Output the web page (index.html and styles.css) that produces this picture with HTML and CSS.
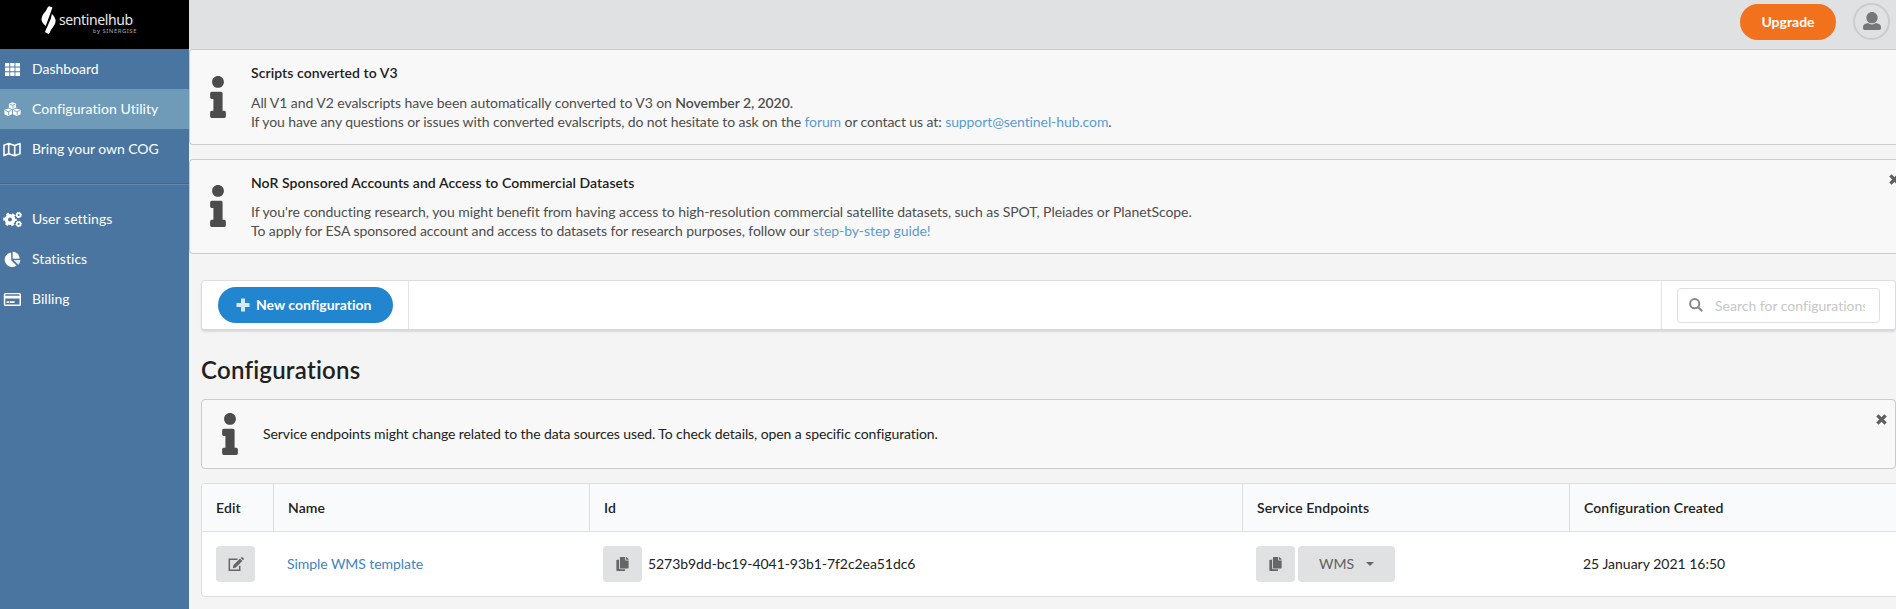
FILE: index.html
```html
<!DOCTYPE html>
<html lang="en">
<head>
<meta charset="utf-8">
<title>Configuration Utility</title>
<link rel="stylesheet" href="styles.css">
</head>
<body>
<svg class="defs" aria-hidden="true">
  <symbol id="info" viewBox="0 0 192 512"><path d="M20 424.229h20V279.771H20c-11.046 0-20-8.954-20-20V212c0-11.046 8.954-20 20-20h112c11.046 0 20 8.954 20 20v212.229h20c11.046 0 20 8.954 20 20V492c0 11.046-8.954 20-20 20H20c-11.046 0-20-8.954-20-20v-47.771c0-11.046 8.954-20 20-20zM96 0C56.235 0 24 32.235 24 72s32.235 72 72 72 72-32.235 72-72S135.764 0 96 0z"/></symbol>
  <symbol id="times" viewBox="0 0 11 11"><path d="M2.6 2.6l5.8 5.8M8.4 2.6L2.6 8.4" fill="none" stroke="currentColor" stroke-width="3.4" stroke-linecap="square"/></symbol>
  <symbol id="copy" viewBox="0 0 448 512"><path d="M320 448v40c0 13.255-10.745 24-24 24H24c-13.255 0-24-10.745-24-24V120c0-13.255 10.745-24 24-24h72v296c0 30.879 25.121 56 56 56h168zm0-344V0H152c-13.255 0-24 10.745-24 24v368c0 13.255 10.745 24 24 24h272c13.255 0 24-10.745 24-24V128H344c-13.2 0-24-10.8-24-24zm120.971-31.029L375.029 7.029A24 24 0 0 0 358.059 0H352v96h96v-6.059a24 24 0 0 0-7.029-16.97z"/></symbol>
</svg>
<div class="app">
  <aside class="sidebar">
    <div class="logo">
      <svg class="mark" viewBox="0 0 15 30"><path d="M6.200 2.200Q7 .2 8.200.2L11.600 1.500 4.600 20.800Q.2 17 .2 13.500Q.3 10.800 2.600 7.800Q5 5 6.200 2.200z"/><path d="M11 8Q14.900 12 14.900 15.800Q14.700 18.500 12.400 21.500Q9.800 24.500 8.600 28L7.500 29 3.800 27 10 13z"/></svg>
      <div class="wordmark"><span class="brand">sentinelhub</span><span class="byline">by SINERGISE</span></div>
    </div>
    <nav>
      <a class="item"><svg class="nav-icon" viewBox="0 0 18 18"><path d="M2 3h4.300v3.600H2zM7.200 3h4.300v3.600H7.200zM12.400 3H17v3.600h-4.600zM2 7.600h4.300v3.600H2zM7.200 7.600h4.300v3.600H7.200zM12.400 7.600H17v3.600h-4.600zM2 12.200h4.300V16H2zM7.200 12.200h4.300V16H7.200zM12.400 12.200H17V16h-4.600z"/></svg>Dashboard</a>
      <a class="item active"><svg class="nav-icon" viewBox="0 0 18 18"><path d="M9.500 2.200l3.600 1.500v4L9.500 9.300 5.900 7.700v-4zM5.200 8.400L9 10v4.300l-3.800 1.600-3.800-1.600V10zM13.800 8.400l3.800 1.600v4.300l-3.800 1.600L10 14.300V10z"/><path class="cut" d="M6.900 4.300l2.600 1 2.600-1M9.900 5.300v3M2.300 10.600l2.900 1.100 2.900-1.100M5.600 11.700v3.100M10.900 10.600l2.900 1.100 2.900-1.100M14.200 11.700v3.100"/></svg><span class="wider">Configuration Utility</span></a>
      <a class="item"><svg class="nav-icon line" viewBox="0 0 18 18"><path d="M1 5.200L5.700 3.500l6 2 5.300-2v10.300l-5.300 2-6-2L1 15.600zM5.700 3.500v10.300M11.700 5.500v10.300"/></svg><span class="cog">Bring your own COG</span></a>
      <div class="divider"></div>
      <a class="item"><svg class="nav-icon wide" viewBox="0 0 19 18"><circle class="ring big" cx="7" cy="9.500" r="3.700"/><circle class="teeth" cx="7" cy="9.500" r="5.800"/><circle class="ring" cx="15.700" cy="5" r="1.900"/><circle class="teeth small" cx="15.700" cy="5" r="2.700"/><circle class="ring" cx="15.700" cy="14" r="1.900"/><circle class="teeth small" cx="15.700" cy="14" r="2.700"/></svg><span class="wider">User settings</span></a>
      <a class="item"><svg class="nav-icon" viewBox="0 0 18 18"><path d="M8.200 2.500v7.700l5.300 5.300A7.300 7.300 0 1 1 8.200 2.500z"/><path opacity=".95" d="M9.700 1.800a7 7 0 0 1 7 7H9.700z"/><path opacity=".85" d="M10.500 10h7a7 7 0 0 1-2.300 4.800z"/></svg><span class="wider">Statistics</span></a>
      <a class="item"><svg class="nav-icon" viewBox="0 0 18 18"><path fill-rule="evenodd" d="M2.300 3h14.200q1.500 0 1.500 1.500v10q0 1.500-1.500 1.500H2.300Q.8 16 .8 14.500v-10Q.8 3 2.300 3zM2.300 4.300v1.400h14.200V4.300zM2.300 8.500v6h14.200v-6zM3.600 11.300h2.300V13H3.600zM6.600 11.300h5V13h-5z"/></svg><span class="wider">Billing</span></a>
    </nav>
  </aside>
  <main class="main">
    <header class="topbar">
      <button class="upgrade">Upgrade</button>
      <div class="avatar"><svg viewBox="0 0 512 512"><path d="M256 0c88.366 0 160 71.634 160 160s-71.634 160-160 160S96 248.366 96 160 167.634 0 256 0zm183.283 333.821l-71.313-17.828c-74.923 53.890-165.738 41.864-223.940 0l-71.313 17.828C29.981 344.505 0 382.903 0 426.955V464c0 26.510 21.490 48 48 48h416c26.510 0 48-21.490 48-48v-37.045c0-44.052-29.981-82.450-72.717-93.134z"/></svg></div>
    </header>
    <section class="message first">
      <svg class="info"><use href="#info"/></svg>
      <div class="content">
        <h3>Scripts converted to V3</h3>
        <p class="l1">All V1 and V2 evalscripts have been automatically converted to V3 on <b>November 2, 2020.</b></p>
        <p class="tight">If you have any questions or issues with converted evalscripts, do not hesitate to ask on the <a>forum</a> or contact us at: <a>support@sentinel-hub.com</a>.</p>
      </div>
    </section>
    <section class="message second">
      <svg class="info"><use href="#info"/></svg>
      <div class="content">
        <h3>NoR Sponsored Accounts and Access to Commercial Datasets</h3>
        <p class="l1">If you're conducting research, you might benefit from having access to high-resolution commercial satellite datasets, such as SPOT, Pleiades or PlanetScope.</p>
        <p>To apply for ESA sponsored account and access to datasets for research purposes, follow our <a>step-by-step guide!</a></p>
      </div>
      <svg class="close"><use href="#times"/></svg>
    </section>
    <div class="page">
      <div class="menu">
        <div class="menu-left"><button class="new"><svg viewBox="0 0 14 14"><path d="M5 .5h4V5h4.500v4H9v4.500H5V9H.5V5H5z"/></svg>New configuration</button></div>
        <div class="menu-right">
          <div class="search"><svg viewBox="0 0 14 14"><circle cx="5.700" cy="5.700" r="4.600"/><path d="M9.200 9.200l4 4"/></svg><span>Search for configurations</span></div>
        </div>
      </div>
      <h1>Configurations</h1>
      <section class="message third">
        <svg class="info"><use href="#info"/></svg>
        <p class="note">Service endpoints might change related to the data sources used. To check details, open a specific configuration.</p>
        <svg class="close"><use href="#times"/></svg>
      </section>
      <div class="table">
        <div class="row head"><div>Edit</div><div>Name</div><div>Id</div><div>Service Endpoints</div><div>Configuration Created</div></div>
        <div class="row">
          <div><button class="square"><svg class="edit" viewBox="0 0 16 14"><path class="box" d="M9.500 2.200H1.300v11h10.400V8.800"/><path d="M12 1.600l2.400 2.400-6.600 6.600-3 .6.500-3zM12.700.9l.7-.7q.5-.4 1 0l1.300 1.300q.5.500 0 1l-.7.700z"/></svg></button></div>
          <div><a class="name">Simple WMS template</a></div>
          <div class="shift"><button class="square"><svg class="copy"><use href="#copy"/></svg></button><span class="uid">5273b9dd-bc19-4041-93b1-7f2c2ea51dc6</span></div>
          <div class="shift"><button class="square"><svg class="copy"><use href="#copy"/></svg></button><button class="wms">WMS<i class="caret"></i></button></div>
          <div class="shift"><span class="date">25 January 2021 16:50</span></div>
        </div>
      </div>
    </div>
  </main>
</div>
</body>
</html>
```
FILE: styles.css
```css
* { box-sizing: border-box; }
html { overflow: hidden; }
body { margin: 0; background: #f4f4f4; color: #212121; font: 14px/20px Lato, "Liberation Sans", sans-serif; font-variant-ligatures: none; overflow: hidden; }
h1, h3, p { margin: 0; }
svg { display: block; fill: currentColor; flex: none; }
button { border: 0; padding: 0; font: inherit; display: flex; align-items: center; flex: none; }
.defs { position: absolute; width: 0; height: 0; }
.app { display: flex; width: 1896px; height: 609px; overflow: hidden; }

.sidebar { width: 189px; flex: none; background: #4a75a0; color: #fff; }
.logo { height: 49px; background: #000; display: flex; padding: 6px 0 0 41px; gap: 3px; }
.mark { width: 15px; height: 29px; }
.wordmark { display: flex; flex-direction: column; width: 78px; padding-top: 5px; font-family: "Noto Sans", sans-serif; }
.brand { font-size: 14px; line-height: 18px; letter-spacing: -.38px; color: #e8e8e8; }
.byline { font-size: 6px; line-height: 7px; align-self: flex-end; margin: -1px 0 0 0; letter-spacing: .5px; color: #aaa; white-space: nowrap; }
.item { display: flex; align-items: center; height: 40px; padding-left: 3px; }
.item.active { background: #6f9bb8; }
.nav-icon { width: 18px; height: 18px; margin-right: 11px; }
.nav-icon.wide { width: 19px; margin-right: 10px; }
.nav-icon .cut { fill: none; stroke: #6f9bb8; stroke-width: .9; }
.nav-icon.line { fill: none; stroke: #fff; stroke-width: 1.600; stroke-linejoin: round; }
.cog { letter-spacing: -.06px; }
.wider { letter-spacing: .05px; }
.ring { fill: none; stroke: #fff; stroke-width: 1.700; }
.ring.big { stroke-width: 3.400; }
.teeth { fill: none; stroke: #fff; stroke-width: 2; stroke-dasharray: 3 3.070; stroke-dashoffset: 1.500; }
.teeth.small { stroke-width: 1; stroke-dasharray: 1.400 1.430; }
.divider { height: 2px; margin: 14px 0; background: #3f6891; border-bottom: 1px solid #6489ad; }

.main { width: 1707px; flex: none; overflow: hidden; }
.topbar { height: 49px; background: #e0e1e2; display: flex; justify-content: flex-end; padding: 3px 6px 0 0; gap: 17px; }
.upgrade { width: 96px; height: 36px; margin-top: 1px; border-radius: 18px; background: #f2711c; color: #fff; font-weight: 700; justify-content: center; }
.avatar { width: 37px; height: 37px; border: 2px solid #ccc; border-radius: 50%; display: flex; align-items: center; justify-content: center; color: #777; }
.avatar svg { width: 18px; height: 18px; margin-top: -1px; }

.message { display: flex; background: #f8f8f8; border: 1px solid #c9cacb; border-radius: 4px; position: relative; }
.first, .second { border-right: 0; border-radius: 4px 0 0 4px; padding-left: 20px; }
.first { height: 96px; }
.second { height: 95px; margin-top: 14px; }
.info { width: 16px; height: 42px; margin-top: 26px; color: #4c4c4c; }
.second .info { margin-top: 25px; }
.content { margin: 13px 0 0 25px; color: #4d4d4d; }
.content h3 { font-size: 14px; line-height: 20px; font-weight: 600; letter-spacing: .07px; color: #212121; }
.content p { line-height: 19px; white-space: nowrap; letter-spacing: -.07px; }
.content .tight { letter-spacing: -.09px; }
.content .l1 { margin-top: 10px; }
.second .l1 { margin-top: 9px; letter-spacing: -.06px; }
.content b { font-weight: 600; }
.content a { color: #5b9bd5; }
.close { position: absolute; width: 11px; height: 11px; color: #606060; top: 14px; right: 8px; }
.second .close { right: -4px; }

.page { padding: 26px 0 0 12px; }
.menu { height: 51px; display: flex; justify-content: space-between; background: #fff; border: 1px solid #dcddde; border-bottom: 2px solid #d8d9da; border-radius: 4px; box-shadow: 0 1px 2px rgba(34,36,38,.12); }
.menu-left { display: flex; align-items: center; width: 207px; padding-left: 16px; border-right: 1px solid #e3e3e4; }
.new { width: 175px; height: 36px; border-radius: 18px; background: #2185d0; color: #fff; font-weight: 700; padding-left: 18px; }
.new svg { width: 14px; height: 14px; margin-right: 6px; opacity: .82; }
.menu-right { width: 234px; padding: 7px 0 0 15px; border-left: 1px solid #e3e3e4; }
.search { width: 203px; height: 35px; border: 1px solid #dedede; border-radius: 4px; display: flex; align-items: center; padding: 0 14px 0 11px; color: #c7c7c7; }
.search svg { width: 14px; height: 14px; margin: -2px 12px 0 0; fill: none; stroke: #888; stroke-width: 2; }
.search span { overflow: hidden; white-space: nowrap; flex: 1; }
h1 { font-size: 24px; line-height: 30px; font-weight: 600; letter-spacing: .24px; margin-top: 24px; }
.third { height: 70px; margin-top: 14px; padding-left: 20px; }
.third .info { margin-top: 13px; }
.note { margin: 24px 0 0 25px; white-space: nowrap; letter-spacing: -.09px; }

.table { width: 1800px; height: 114px; margin-top: 14px; background: #fff; border: 1px solid #dcddde; border-radius: 4px; overflow: hidden; }
.row { display: grid; grid-template-columns: 72px 316px 653px 327px 1fr; height: 64px; }
.row > div { display: flex; align-items: center; padding-left: 14px; }
.row > .shift { padding-left: 13px; }
.row.head { height: 48px; background: #f9fafb; border-bottom: 1px solid #dee0e2; font-weight: 600; }
.head > div { border-right: 1px solid #dcdddf; letter-spacing: .1px; }
.square { width: 39px; height: 36px; border-radius: 4px; background: #e0e1e2; color: #666; justify-content: center; }
.copy { width: 13px; height: 14px; }
.edit { width: 16px; height: 14px; }
.edit .box { fill: none; stroke: #666; stroke-width: 1.500; }
.name { color: #4183c4; margin-left: -1px; letter-spacing: -.06px; }
.uid { margin-left: 6px; letter-spacing: -.06px; }
.wms { width: 97px; height: 36px; margin-left: 3px; padding-left: 21px; border-radius: 4px; background: #e0e1e2; color: #5f6060; }
.caret { margin-left: 12px; border: 4px solid transparent; border-top: 4px solid #666; border-bottom: 0; }
```
